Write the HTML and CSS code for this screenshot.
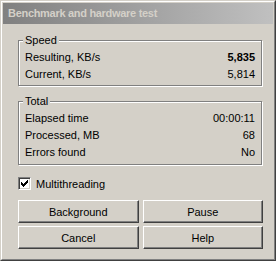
FILE: index.html
```html
<!DOCTYPE html>
<html lang="en">
<head>
  <meta charset="UTF-8" />
  <title>Benchmark and hardware test</title>
  <link rel="stylesheet" href="styles.css">
</head>
<body>
  <div class="window">
    <div class="window-inner">
      <div class="titlebar">Benchmark and hardware test</div>
      <div class="content">
        <div class="group speed">
          <span class="group-title">Speed</span>
          <div class="row"><span>Resulting, KB/s</span><span class="strong">5,835</span></div>
          <div class="row"><span>Current, KB/s</span><span>5,814</span></div>
        </div>
        <div class="group total">
          <span class="group-title">Total</span>
          <div class="row"><span>Elapsed time</span><span>00:00:11</span></div>
          <div class="row"><span>Processed, MB</span><span>68</span></div>
          <div class="row"><span>Errors found</span><span>No</span></div>
        </div>
        <label class="check">
          <span class="check-box">
            <svg width="7" height="7" viewBox="0 0 7 7" shape-rendering="crispEdges">
              <path d="M0 2h1v3H0z M1 3h1v3H1z M2 4h1v3H2z M3 3h1v3H3z M4 2h1v3H4z M5 1h1v3H5z M6 0h1v3H6z" fill="#000"/>
            </svg>
          </span>
          Multithreading
        </label>
        <div class="buttons">
          <button>Background</button>
          <button>Pause</button>
          <button>Cancel</button>
          <button>Help</button>
        </div>
      </div>
    </div>
  </div>
</body>
</html>
```

FILE: styles.css
```css
body, html {
  margin: 0;
  padding: 0;
  background: #fff;
  font-family: 'Liberation Sans', Arial, sans-serif;
  font-size: 11px;
  color: #000;
}
.window {
  width: 276px;
  height: 261px;
  box-sizing: border-box;
  background: #d4d0c8;
  border: 1px solid;
  border-color: #d4d0c8 #404040 #404040 #d4d0c8;
}
.window-inner {
  height: 100%;
  box-sizing: border-box;
  border: 1px solid;
  border-color: #fff #808080 #808080 #fff;
  padding: 1px;
}
.titlebar {
  height: 21px;
  line-height: 21px;
  padding-left: 5px;
  background: linear-gradient(to right, #808080, #c0c0c0);
  color: #d4d0c8;
  font-weight: bold;
  letter-spacing: -0.3px;
}
.content {
  padding: 16px 10px 0 15px;
}
.group {
  position: relative;
  border: 1px solid #808080;
  box-shadow: 1px 1px 0 #fff, inset 1px 1px 0 #fff;
  padding: 8px 6px 2px 6px;
  margin-right: 1px;
}
.total {
  margin-top: 15px;
  padding-top: 8px;
  padding-bottom: 3px;
}
.group-title {
  position: absolute;
  top: -8px;
  left: 4px;
  padding: 0 2px;
  line-height: 15px;
  background: #d4d0c8;
}
.row {
  display: flex;
  justify-content: space-between;
  line-height: 17px;
}
.strong {
  font-weight: bold;
}
.check {
  display: flex;
  align-items: center;
  gap: 5px;
  margin-top: 12px;
  height: 13px;
}
.check-box {
  width: 13px;
  height: 13px;
  box-sizing: border-box;
  border: 1px solid;
  border-color: #808080 #fff #fff #808080;
  box-shadow: inset 1px 1px 0 #404040, inset -1px -1px 0 #d4d0c8;
  background: #fff;
  display: flex;
  align-items: center;
  justify-content: center;
}
.buttons {
  display: grid;
  grid-template-columns: 1fr 1fr;
  gap: 3px 4px;
  margin-top: 10px;
}
.buttons button {
  height: 23px;
  padding: 0;
  font-family: inherit;
  font-size: 11px;
  color: #000;
  background: #d4d0c8;
  border: 1px solid;
  border-color: #fff #404040 #404040 #fff;
  box-shadow: inset -1px -1px 0 #808080;
}
```
